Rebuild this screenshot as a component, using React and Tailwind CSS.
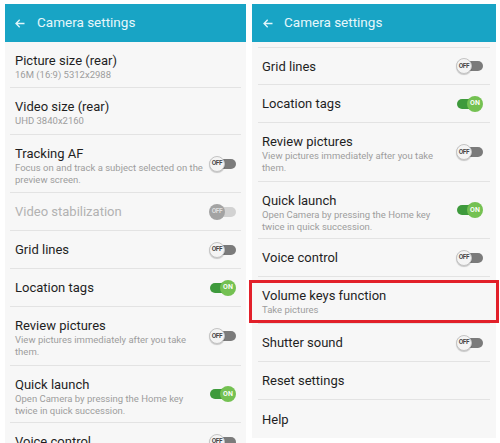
const leftRows = [
  { title: "Picture size (rear)", sub: ["16M (16:9) 5312x2988"], h: "h-[46px]" },
  { title: "Video size (rear)", sub: ["UHD 3840x2160"], h: "h-[47px]" },
  {
    title: "Tracking AF",
    sub: ["Focus on and track a subject selected on the", "preview screen."],
    toggle: "off",
    h: "h-[58px]",
  },
  { title: "Video stabilization", toggle: "disabled", disabled: true, h: "h-[38px]" },
  { title: "Grid lines", toggle: "off", h: "h-[38px]" },
  { title: "Location tags", toggle: "on", h: "h-[38px]" },
  {
    title: "Review pictures",
    sub: ["View pictures immediately after you take", "them."],
    toggle: "off",
    h: "h-[59px]",
  },
  {
    title: "Quick launch",
    sub: ["Open Camera by pressing the Home key", "twice in quick succession."],
    toggle: "on",
    h: "h-[57px]",
  },
  { title: "Voice control", toggle: "off", h: "h-[38px]" },
];

const rightRows = [
  { title: "Grid lines", toggle: "off", h: "h-[37px]" },
  { title: "Location tags", toggle: "on", h: "h-[38px]" },
  {
    title: "Review pictures",
    sub: ["View pictures immediately after you take", "them."],
    toggle: "off",
    h: "h-[59px]",
  },
  {
    title: "Quick launch",
    sub: ["Open Camera by pressing the Home key", "twice in quick succession."],
    toggle: "on",
    h: "h-[57px]",
  },
  { title: "Voice control", toggle: "off", h: "h-[38px]" },
  { title: "Volume keys function", sub: ["Take pictures"], h: "h-[47px]" },
  { title: "Shutter sound", toggle: "off", h: "h-[38px]" },
  { title: "Reset settings", h: "h-[38px]" },
  { title: "Help", h: "h-[38px]", last: true },
];

const Toggle = ({ state }) => {
  if (state === "on") {
    return (
      <div className="relative w-[27px] h-[16px] shrink-0">
        <div className="absolute left-[1px] right-[3px] top-[3px] h-[10px] rounded-full bg-[#3e9a3c]" />
        <div className="absolute right-0 top-0 w-[16px] h-[16px] rounded-full bg-[#74c152] flex items-center justify-center text-[7px] font-semibold text-white leading-none">
          ON
        </div>
      </div>
    );
  }
  const disabled = state === "disabled";
  return (
    <div className="relative w-[27px] h-[16px] shrink-0">
      <div
        className={`absolute left-[3px] right-0 top-[3px] h-[10px] rounded-full ${
          disabled ? "bg-[#d2d2d2]" : "bg-[#7b7b7b]"
        }`}
      />
      <div
        className={`absolute left-0 top-0 w-[16px] h-[16px] rounded-full flex items-center justify-center text-[6.5px] font-semibold leading-none tracking-[-0.3px] ${
          disabled
            ? "bg-[#a3a3a3] text-[#e0e0e0]"
            : "bg-[#f4f4f4] border border-[#c4c4c4] text-[#444] shadow-[0_1px_1px_rgba(0,0,0,0.2)]"
        }`}
      >
        OFF
      </div>
    </div>
  );
};

const Row = ({ row, inset }) => (
  <div
    className={`${row.h} ${inset} shrink-0 flex items-center justify-between ${
      row.last ? "" : "border-b border-[#e3e3e3]"
    }`}
  >
    <div className={row.sub ? "self-start pt-[10px]" : ""}>
      <div
        className={`text-[13px] leading-[17px] whitespace-nowrap ${
          row.disabled ? "text-[#b2b2b2]" : "text-[#1f1f1f]"
        }`}
      >
        {row.title}
      </div>
      {row.sub?.map((line) => (
        <div key={line} className="text-[9.5px] leading-[12px] text-[#9d9d9d] whitespace-nowrap">
          {line}
        </div>
      ))}
    </div>
    {row.toggle && <Toggle state={row.toggle} />}
  </div>
);

const Header = ({ pad }) => (
  <div className={`h-[38px] shrink-0 bg-[#18a4c5] flex items-center ${pad}`}>
    <svg width="10" height="9" viewBox="0 0 10 9">
      <path d="M9.5 4.5H1M4.7 0.8L1 4.5L4.7 8.2" stroke="#e3f6fb" strokeWidth="1.3" fill="none" />
    </svg>
    <span className="text-[13.5px] text-[#e6f7fb] leading-none">Camera settings</span>
  </div>
);

export default function App() {
  return (
    <div className="relative w-[500px] h-[443px] overflow-hidden bg-white flex items-start pt-[4px] pl-[5px] gap-[6px] font-['Roboto',sans-serif]">
      {/* Left screen */}
      <div className="w-[241px] h-[439px] bg-[#f7f7f7] flex flex-col overflow-hidden">
        <Header pad="pl-[10px] gap-[12px]" />
        {leftRows.map((row) => (
          <Row key={row.title} row={row} inset="mx-[5px] pl-[5px] pr-[5px]" />
        ))}
      </div>

      {/* Right screen */}
      <div className="w-[244px] h-[434px] bg-[#f7f7f7] flex flex-col overflow-hidden">
        <Header pad="pl-[11px] gap-[11px]" />
        <div className="h-[6px] shrink-0 mx-[6px] border-b border-[#e3e3e3]" />
        {rightRows.map((row) => (
          <Row key={row.title} row={row} inset="mx-[6px] pl-[4px] pr-[7px]" />
        ))}
      </div>

      {/* Highlight box */}
      <div className="absolute left-[249px] top-[280px] w-[250px] h-[43px] border-[3px] border-[#e2202a] pointer-events-none" />
    </div>
  );
}
